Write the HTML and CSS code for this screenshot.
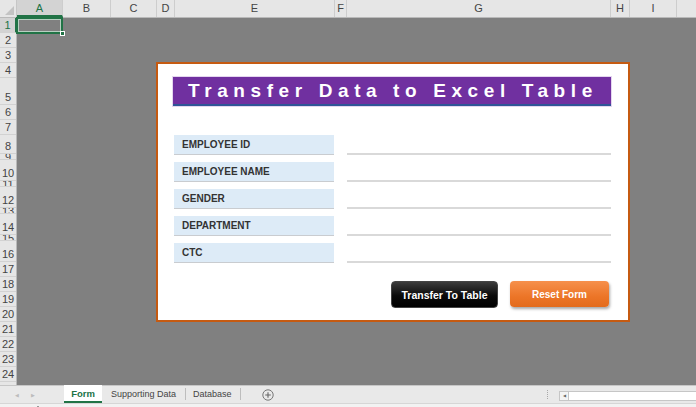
FILE: index.html
```html
<!DOCTYPE html>
<html lang="en">
<head>
  <meta charset="UTF-8">
  <title>Transfer Data to Excel Table</title>
  <link rel="stylesheet" href="styles.css">
</head>
<body>
  <div class="sheet">
    <!-- column headers -->
    <div class="colheads">
      <div class="corner"><span class="tri"></span></div>
      <div class="col sel" style="width:46px">A</div>
      <div class="col" style="width:48px">B</div>
      <div class="col" style="width:46px">C</div>
      <div class="col" style="width:18px">D</div>
      <div class="col" style="width:160px">E</div>
      <div class="col" style="width:12px">F</div>
      <div class="col" style="width:264px">G</div>
      <div class="col" style="width:19px">H</div>
      <div class="col" style="width:47px">I</div>
      <div class="col rest"></div>
    </div>

    <div class="grid-body">
      <div class="rowheads">
        <div class="row sel" style="height:15px">1</div>
        <div class="row" style="height:15px">2</div>
        <div class="row" style="height:15px">3</div>
        <div class="row" style="height:15px">4</div>
        <div class="row tall" style="height:27px">5</div>
        <div class="row" style="height:15px">6</div>
        <div class="row" style="height:15px">7</div>
        <div class="row tall" style="height:19px">8</div>
        <div class="row short" style="height:6px">9</div>
        <div class="row tall" style="height:21px">10</div>
        <div class="row short" style="height:6px">11</div>
        <div class="row tall" style="height:21px">12</div>
        <div class="row short" style="height:6px">13</div>
        <div class="row tall" style="height:21px">14</div>
        <div class="row short" style="height:6px">15</div>
        <div class="row tall" style="height:21px">16</div>
        <div class="row" style="height:15px">17</div>
        <div class="row" style="height:15px">18</div>
        <div class="row" style="height:15px">19</div>
        <div class="row" style="height:15px">20</div>
        <div class="row" style="height:15px">21</div>
        <div class="row" style="height:15px">22</div>
        <div class="row" style="height:15px">23</div>
        <div class="row" style="height:15px">24</div>
        <div class="row" style="height:15px">25</div>
      </div>

      <div class="canvas">
        <div class="cell-cursor"><span class="handle"></span></div>

        <!-- the form shape floating on the sheet -->
        <div class="form-box">
          <div class="form-title">Transfer Data to Excel Table</div>
          <div class="fields">
            <div class="field"><div class="label">EMPLOYEE ID</div><div class="input"></div></div>
            <div class="field"><div class="label">EMPLOYEE NAME</div><div class="input"></div></div>
            <div class="field"><div class="label">GENDER</div><div class="input"></div></div>
            <div class="field"><div class="label">DEPARTMENT</div><div class="input"></div></div>
            <div class="field"><div class="label">CTC</div><div class="input"></div></div>
          </div>
          <div class="actions">
            <button class="btn btn-dark">Transfer To Table</button>
            <button class="btn btn-orange">Reset Form</button>
          </div>
        </div>
      </div>
    </div>

    <!-- sheet tabs -->
    <div class="tabbar">
      <div class="nav">
        <span class="arrow">&#9664;</span>
        <span class="arrow">&#9654;</span>
      </div>
      <div class="tab active">Form</div>
      <div class="tab">Supporting Data</div>
      <div class="tab sep">Database</div>
      <div class="add">
        <svg width="12" height="12" viewBox="0 0 12 12">
          <circle cx="6" cy="6" r="5.2" fill="none" stroke="#777" stroke-width="1"/>
          <path d="M6 3.2v5.6M3.2 6h5.6" stroke="#666" stroke-width="1.1"/>
        </svg>
      </div>
      <div class="spacer"></div>
      <div class="grip"></div>
      <div class="hscroll"><span class="hbtn">&#9664;</span></div>
    </div>
    <div class="statusbar"><span class="mark"></span></div>
  </div>
</body>
</html>
```

FILE: styles.css
```css
* { box-sizing: border-box; }
body {
  margin: 0;
  font-family: 'Liberation Sans', Arial, sans-serif;
  background: #808080;
  color: #444;
}
.sheet {
  width: 696px;
  height: 407px;
  overflow: hidden;
  display: flex;
  flex-direction: column;
}

/* headers */
.colheads {
  display: flex;
  height: 18px;
  flex-shrink: 0;
  background: #e6e6e6;
  border-bottom: 1px solid #b9b9b9;
}
.corner {
  width: 17px;
  position: relative;
  border-right: 1px solid #c6c6c6;
}
.corner .tri {
  position: absolute;
  right: 2px;
  bottom: 2px;
  width: 0;
  height: 0;
  border-left: 9px solid transparent;
  border-bottom: 9px solid #c3c3c3;
}
.col {
  border-right: 1px solid #cdcdcd;
  font-size: 11px;
  line-height: 17px;
  text-align: center;
  color: #444;
  overflow: hidden;
}
.col.sel {
  background: #d3d3d3;
  color: #217346;
  border-bottom: 2px solid #217346;
}
.col.rest { flex: 1; border-right: none; }

.grid-body {
  display: flex;
  height: 367px;
  flex-shrink: 0;
}
.rowheads {
  width: 17px;
  flex-shrink: 0;
  background: #e6e6e6;
  border-right: 1px solid #b9b9b9;
}
.row {
  border-bottom: 1px solid #d2d2d2;
  font-size: 11px;
  text-align: center;
  display: flex;
  align-items: center;
  justify-content: center;
  overflow: hidden;
  color: #444;
}
.row.tall { align-items: flex-end; padding-bottom: 1px; }
.row.sel {
  background: #d3d3d3;
  color: #217346;
  border-right: 2px solid #217346;
  margin-right: -1px;
}

.canvas {
  flex: 1;
  position: relative;
  background: #808080;
}
.cell-cursor {
  position: absolute;
  left: -1px;
  top: -1px;
  width: 47px;
  height: 17px;
  border: 2px solid #217346;
  box-shadow: inset 0 0 0 1px #b7cfc1;
}
.cell-cursor .handle {
  position: absolute;
  right: -4px;
  bottom: -4px;
  width: 5px;
  height: 5px;
  background: #217346;
  border: 1px solid #fff;
}

/* form */
.form-box {
  position: absolute;
  left: 139px;
  top: 44px;
  width: 474px;
  height: 260px;
  background: #fff;
  border: 2px solid #c55a11;
  padding: 13px 17px 0 15px;
}
.form-title {
  height: 29px;
  background: #7030a0;
  border-bottom: 2px solid #2f5597;
  box-shadow: 0 0 0 1px #e4d6ef;
  color: #fff;
  font-weight: bold;
  font-size: 19px;
  line-height: 27px;
  letter-spacing: 5.6px;
  padding-left: 15px;
  white-space: nowrap;
}
.fields {
  margin-top: 29px;
  display: flex;
  flex-direction: column;
  gap: 7px;
}
.field {
  display: flex;
  height: 20px;
  gap: 13px;
}
.label {
  width: 160px;
  margin-left: 1px;
  background: #ddebf7;
  border-bottom: 1px solid #c9ccd0;
  font-size: 10px;
  font-weight: bold;
  color: #333;
  line-height: 19px;
  padding-left: 8px;
}
.input {
  flex: 1;
  border-bottom: 2px solid #d9d9d9;
}
.actions {
  display: flex;
  justify-content: flex-end;
  gap: 12px;
  margin-top: 18px;
  padding-right: 2px;
}
.btn {
  border: none;
  border-radius: 4px;
  color: #fff;
  font-family: 'Liberation Sans', Arial, sans-serif;
  font-weight: bold;
  font-size: 10.5px;
  height: 27px;
  padding: 0;
}
.btn-dark {
  width: 107px;
  background: linear-gradient(#3c3c3c, #0a0a0a 55%, #000);
  border: 1px solid #444;
}
.btn-orange {
  width: 99px;
  height: 26px;
  font-size: 10px;
  background: linear-gradient(#f6904c, #ec7527 60%, #e36b1c);
  box-shadow: 1px 2px 3px rgba(0, 0, 0, 0.35);
}

/* tabs */
.tabbar {
  height: 18px;
  flex-shrink: 0;
  display: flex;
  align-items: stretch;
  background: #e9e9e9;
  border-top: 1px solid #c6c6c6;
  font-size: 9px;
  color: #444;
}
.nav {
  width: 64px;
  display: flex;
  align-items: center;
  gap: 12px;
  padding-left: 15px;
}
.nav .arrow { font-size: 5px; color: #bcbcbc; }
.tab {
  padding: 0 9px;
  line-height: 17px;
}
.tab.active {
  background: #fff;
  color: #217346;
  font-weight: bold;
  font-size: 9.5px;
  width: 38px;
  text-align: center;
  padding: 0;
  border-bottom: 2px solid #217346;
  margin-top: -1px;
  line-height: 18px;
}
.tab.sep {
  border-left: 1px solid #bdbdbd;
  border-right: 1px solid #bdbdbd;
  margin: 2px 0 3px;
  line-height: 13px;
  padding: 0 8px 0 7px;
}
.add {
  display: flex;
  align-items: center;
  padding-left: 21px;
}
.spacer { flex: 1; }
.grip {
  width: 2px;
  margin: 4px 10px 4px 0;
  border-left: 1px dotted #a8a8a8;
}
.hscroll {
  width: 137px;
  margin: 5px 0 2px;
  background: #fff;
  border: 1px solid #c6c6c6;
  border-right: none;
}
.hbtn {
  display: inline-block;
  width: 9px;
  height: 100%;
  border-right: 1px solid #c6c6c6;
  background: #f4f4f4;
  font-size: 4px;
  line-height: 8px;
  text-align: center;
  color: #666;
  vertical-align: top;
}
.statusbar {
  flex: 1;
  background: #f2f2f2;
  border-top: 1px solid #d6d6d6;
  position: relative;
}
.statusbar .mark {
  position: absolute;
  left: 37px;
  top: 2px;
  width: 2px;
  height: 2px;
  background: #999;
}
```
